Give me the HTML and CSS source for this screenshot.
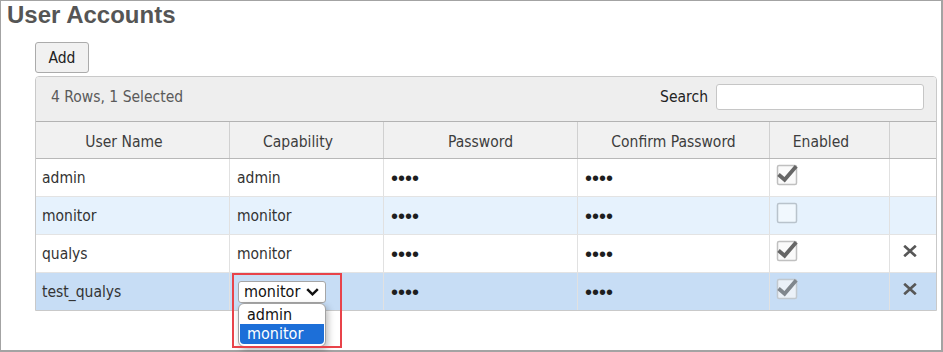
FILE: index.html
```html
<!DOCTYPE html>
<html lang="en">
<head>
<meta charset="utf-8">
<title>User Accounts</title>
<link rel="stylesheet" href="styles.css">
</head>
<body>
<div class="page">
  <h1 class="title">User Accounts</h1>
  <button class="btn" type="button">Add</button>
  <div class="grid">
    <div class="toolbar">
      <span class="count">4 Rows, 1 Selected</span>
      <label class="search">Search <span class="search-input"></span></label>
    </div>
    <div class="row head">
      <div class="cell sortable">User Name</div>
      <div class="cell sortable">Capability</div>
      <div class="cell">Password</div>
      <div class="cell">Confirm Password</div>
      <div class="cell sortable">Enabled</div>
      <div class="cell"></div>
    </div>
    <div class="row">
      <div class="cell">admin</div>
      <div class="cell">admin</div>
      <div class="cell"><span class="dots">••••</span></div>
      <div class="cell"><span class="dots">••••</span></div>
      <div class="cell"><svg class="chk" width="22" height="22" viewBox="0 0 22 22"><rect x="1.5" y="1.5" width="19" height="19" rx="1.5" class="chk-box"/><path d="M2.5 10.5 L8.6 15.8 L20.2 2.2" class="chk-mark"/></svg></div>
      <div class="cell"></div>
    </div>
    <div class="row alt">
      <div class="cell">monitor</div>
      <div class="cell">monitor</div>
      <div class="cell"><span class="dots">••••</span></div>
      <div class="cell"><span class="dots">••••</span></div>
      <div class="cell"><svg class="chk" width="22" height="22" viewBox="0 0 22 22"><rect x="1.5" y="1.5" width="19" height="19" rx="1.5" class="chk-box off"/></svg></div>
      <div class="cell"></div>
    </div>
    <div class="row">
      <div class="cell">qualys</div>
      <div class="cell">monitor</div>
      <div class="cell"><span class="dots">••••</span></div>
      <div class="cell"><span class="dots">••••</span></div>
      <div class="cell"><svg class="chk" width="22" height="22" viewBox="0 0 22 22"><rect x="1.5" y="1.5" width="19" height="19" rx="1.5" class="chk-box"/><path d="M2.5 10.5 L8.6 15.8 L20.2 2.2" class="chk-mark"/></svg></div>
      <div class="cell del"><svg class="x" width="14" height="12" viewBox="0 0 14 12"><path d="M1.2 0.8 L12.8 11.2 M12.8 0.8 L1.2 11.2"/></svg></div>
    </div>
    <div class="row selected">
      <div class="cell">test_qualys</div>
      <div class="cell">
        <span class="select">
          <span class="select-value">monitor</span>
          <svg class="chev" width="13" height="8" viewBox="0 0 13 8"><path d="M1.2 1.2 L6.5 6.3 L11.8 1.2"/></svg>
          <span class="listbox">
            <span class="option">admin</span>
            <span class="option active">monitor</span>
          </span>
        </span>
      </div>
      <div class="cell"><span class="dots">••••</span></div>
      <div class="cell"><span class="dots">••••</span></div>
      <div class="cell"><svg class="chk dim" width="22" height="22" viewBox="0 0 22 22"><rect x="1.5" y="1.5" width="19" height="19" rx="1.5" class="chk-box"/><path d="M2.5 10.5 L8.6 15.8 L20.2 2.2" class="chk-mark"/></svg></div>
      <div class="cell del"><svg class="x" width="14" height="12" viewBox="0 0 14 12"><path d="M1.2 0.8 L12.8 11.2 M12.8 0.8 L1.2 11.2"/></svg></div>
    </div>
  </div>
  <div class="callout"></div>
</div>
</body>
</html>
```

FILE: styles.css
```css
* { box-sizing: border-box; }

html, body {
  margin: 0;
  padding: 0;
  background: #ffffff;
  overflow: hidden;
}

.page {
  position: relative;
  width: 943px;
  height: 352px;
  border: 1px solid #a3a3a3;
  border-right-width: 2px;
  border-bottom-width: 2px;
  font-family: "DejaVu Sans Condensed", "DejaVu Sans", sans-serif;
  font-stretch: condensed;
  font-size: 15.5px;
  color: #333333;
}

.title {
  margin: 0;
  padding-left: 6px;
  font-family: "Liberation Sans", Arial, sans-serif;
  font-stretch: normal;
  font-weight: bold;
  font-size: 24px;
  line-height: 28px;
  color: #555555;
}

.btn {
  display: block;
  margin: 13px 0 0 34px;
  width: 54px;
  height: 31px;
  padding: 0;
  border: 1px solid #ababab;
  border-radius: 3px;
  background: #f1f1f1;
  font: inherit;
  font-stretch: condensed;
  color: #222222;
}

.grid {
  margin: 3px 0 0 34px;
  width: 902px;
  border: 1px solid #c9c9c9;
  border-radius: 4px 4px 0 0;
}

.toolbar {
  display: flex;
  align-items: center;
  justify-content: space-between;
  height: 45px;
  padding: 0 12px 4px 15px;
  background: #eeeeee;
  border-radius: 3px 3px 0 0;
  border-bottom: 1px solid #b3b3b3;
}

.count { color: #5a5a5a; }

.search {
  display: flex;
  align-items: center;
  gap: 8px;
  color: #222222;
}

.search-input {
  display: block;
  width: 208px;
  height: 26px;
  background: #ffffff;
  border: 1px solid #c6c6c6;
  border-radius: 3px;
}

.row {
  display: grid;
  grid-template-columns: 193px 154px 194px 192px 120px 1fr;
  height: 38px;
  border-bottom: 1px solid #e3e3e3;
  background: #ffffff;
}

.row:last-child { border-bottom: none; height: 37px; }

.row.alt { background: #e6f2fd; }
.row.selected { background: #c7ddf5; }

.row.head {
  height: 37px;
  background: #f1f1f1;
  border-bottom: 1px solid #b8b8b8;
  color: #3d3d3d;
}

.cell {
  display: flex;
  align-items: center;
  padding: 0 7px;
  border-left: 1px solid #e1e1e1;
  white-space: nowrap;
}

.cell:first-child {
  border-left: none;
  padding-left: 6px;
}

.head .cell {
  justify-content: center;
  padding-top: 3px;
  border-left-color: #d0d0d0;
}

.head .cell.sortable { padding: 3px 17px 0 0; }

.dots {
  font-family: "Liberation Sans", Arial, sans-serif;
  font-stretch: normal;
  font-size: 20px;
  line-height: 1;
  color: #1e1e1e;
}

.chk {
  display: block;
  margin-bottom: 6px;
  margin-left: -1px;
}

.chk-box {
  fill: #fafafa;
  stroke: #c0c0c0;
  stroke-width: 1.5;
}

.chk-box.off {
  fill: rgba(255, 255, 255, 0.45);
  stroke: #b9c3cc;
}

.chk-mark {
  fill: none;
  stroke: #666666;
  stroke-width: 3.8;
  stroke-linejoin: miter;
}

.chk.dim { opacity: 0.72; }

.del { padding-left: 13px; }

.x {
  display: block;
  margin-bottom: 6px;
}

.x path {
  fill: none;
  stroke: #575757;
  stroke-width: 2.7;
}

.select {
  position: relative;
  display: flex;
  align-items: center;
  justify-content: space-between;
  width: 88px;
  height: 22px;
  margin-left: 1px;
  padding: 0 6px 0 5px;
  background: #ffffff;
  border: 1px solid #a6a6a6;
  border-radius: 3px;
  color: #111111;
  font-size: 16px;
}

.chev {
  display: block;
}

.chev path {
  fill: none;
  stroke: #111111;
  stroke-width: 2.5;
}

.listbox {
  position: absolute;
  top: 21px;
  left: -1px;
  width: 88px;
  display: flex;
  flex-direction: column;
  padding: 1px 1px 2px;
  background: #ffffff;
  border: 1px solid #a2a2a2;
  border-radius: 6px;
  overflow: hidden;
  box-shadow: 2px 3px 7px rgba(0, 0, 0, 0.28);
}

.option {
  display: block;
  height: 19px;
  line-height: 19px;
  padding-left: 7px;
  color: #111111;
}

.option.active {
  height: 20px;
  background: #1d6fd8;
  color: #ffffff;
  border-radius: 0 0 4px 4px;
}

.callout {
  position: absolute;
  left: 231px;
  top: 272px;
  width: 110px;
  height: 75px;
  border: 2px solid #e8434a;
  pointer-events: none;
}
```
